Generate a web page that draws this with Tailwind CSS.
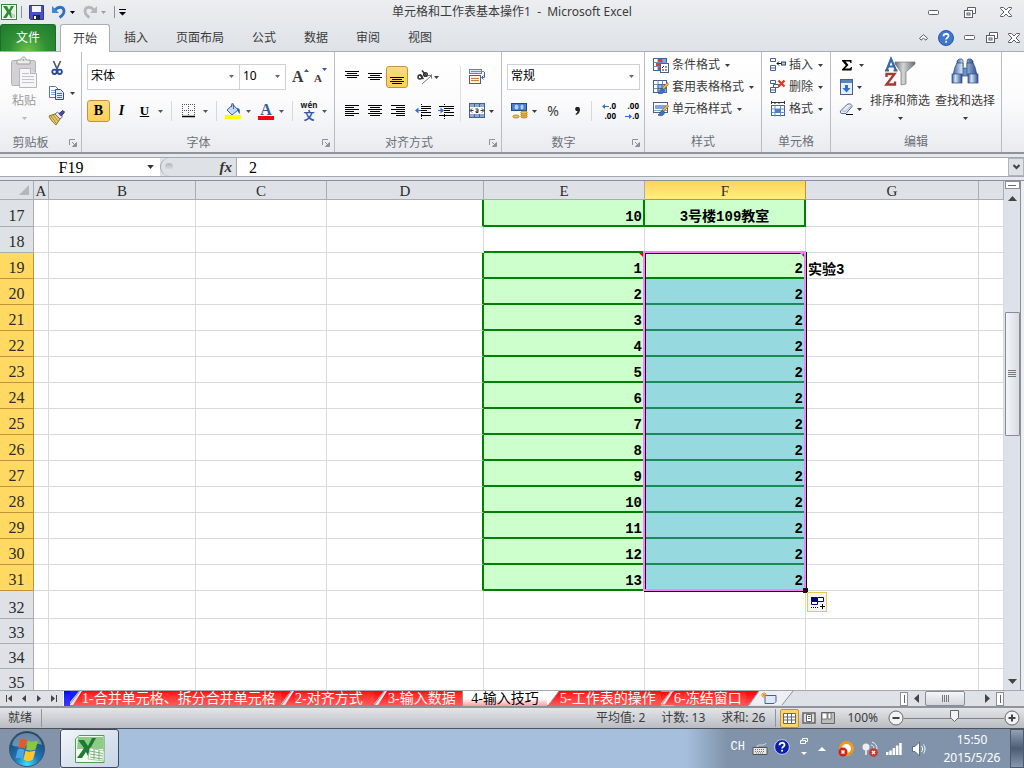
<!DOCTYPE html>
<html lang="zh-CN">
<head>
    <meta charset="UTF-8">
    <meta name="viewport" content="width=device-width, initial-scale=1.0">
    <title>单元格和工作表基本操作1 - Microsoft Excel</title>
    <script src="https://cdn.jsdelivr.net/npm/@tailwindcss/browser@4"></script>
</head>
<body class="h-screen flex flex-col overflow-hidden bg-[#e4e7eb] text-[12px] leading-4 text-[#3b3b3b] font-['Noto_Sans','Noto_Sans_CJK_SC',sans-serif]">

    <!-- Shared icons -->
    <svg class="absolute w-0 h-0">
        <symbol id="arrow" viewBox="0 0 5 3"><path d="M0 0h5L2.500 3z" fill="currentColor"/></symbol>
        <symbol id="launcher" viewBox="0 0 8 8"><path d="M.5 6V.5H6" fill="none" stroke="#8b929b"/><path d="M3 3l3 3M7.500 3.500v4h-4z" stroke="#8b929b" fill="#8b929b"/></symbol>
        <symbol id="win-min" viewBox="0 0 12 5"><rect x=".5" y=".5" width="10" height="4" rx="1" fill="#fff" stroke="#5a5f69"/></symbol>
        <symbol id="win-restore" viewBox="0 0 12 11"><path d="M3.500 3V.5h8v6H9" fill="#fff" stroke="#5a5f69"/><rect x=".5" y="3.500" width="8" height="7" fill="#fff" stroke="#5a5f69"/><rect x="3" y="6" width="3" height="2" fill="none" stroke="#5a5f69"/></symbol>
        <symbol id="win-close" viewBox="0 0 12 10"><path d="M.5.5h3L6 3 8.500.5h3v1L8 5l3.500 3.500v1h-3L6 7 3.500 9.500h-3v-1L4 5 .5 1.500z" fill="#fff" stroke="#5a5f69"/></symbol>
        <symbol id="grid16" viewBox="0 0 16 16"><rect x=".5" y="1.500" width="13" height="12" fill="#fff" stroke="#3f5f96"/><path d="M.5 5.500h13M.5 9.500h13M5 1.500v12M9.500 1.500v12" stroke="#6d8fc4"/></symbol>
        <symbol id="brush16" viewBox="0 0 16 16"><path d="M15.500 5.500l-5 5-1.500-.500.500-1.500 5-5z" fill="#f4b63c" stroke="#a66a14" stroke-width=".7"/><path d="M10 9.500c-1.500 0-2.500 1-3 2.500-.3 1-1 1.500-2 2 3 1.500 6.500.5 6.500-3z" fill="#3c74cc" stroke="#1f4b94" stroke-width=".7"/></symbol>
        <linearGradient id="barrel"><stop stop-color="#3a62a0"/><stop offset=".35" stop-color="#cfe0f6"/><stop offset="1" stop-color="#2e5290"/></linearGradient>
        <linearGradient id="funnel"><stop stop-color="#6c6f73"/><stop offset=".4" stop-color="#d4d6d8"/><stop offset="1" stop-color="#6a6d70"/></linearGradient>
        <linearGradient id="redtab" x2="0" y2="1"><stop stop-color="#ff0000"/><stop offset="1" stop-color="#ff5b5b"/></linearGradient>
    </svg>

    <!-- Title bar -->
    <header class="h-6 shrink-0 flex items-center justify-between bg-linear-to-b from-[#eceef0] to-[#e5e8ec]">
        <div class="flex items-center w-[340px] pl-px">
            <svg class="w-4 h-4" viewBox="0 0 16 16"><rect x=".5" y=".5" width="15" height="15" fill="#fff" stroke="#2f8a3c"/><rect x="2" y="2" width="12" height="12" fill="#e3f2df"/><path d="M2 2h4l2 4 2-4h3L9.500 8l4 6H10L7.800 10 5.500 14H2l4-6z" fill="#2e8b34"/><path d="M10 10h4v4h-3z" fill="#b9dfb4"/></svg>
            <div class="w-px h-3 bg-[#8b8f96] ml-1"></div>
            <button class="ml-[7px]" aria-label="保存"><svg class="w-[15px] h-[15px]" viewBox="0 0 15 15"><path d="M.5.5h14v14h-13l-1-1z" fill="#4b50c0" stroke="#30358f"/><path d="M3 1h9v6H3z" fill="#f4f6fc"/><path d="M4 10h7v4.500H4z" fill="#1d2350"/><path d="M5 11h2v3H5z" fill="#fff"/></svg></button>
            <button class="ml-2" aria-label="撤消"><svg class="w-[14px] h-[14px]" viewBox="0 0 14 14"><path d="M3 5c4-4.500 9-3 9 1 0 3-2 5-4.500 6.500" fill="none" stroke="#2f6fc0" stroke-width="2.800"/><path d="M0 1V8h7z" fill="#4186d4"/></svg></button>
            <svg class="w-[5px] h-[3px] ml-1 text-black"><use href="#arrow"/></svg>
            <button class="ml-2" aria-label="恢复"><svg class="w-[14px] h-[14px]" viewBox="0 0 14 14"><path d="M11 5C7 .5 2 2 2 6c0 3 2 5 4.500 6.500" fill="none" stroke="#b4b8bd" stroke-width="2.800"/><path d="M14 1V8H7z" fill="#b4b8bd"/></svg></button>
            <svg class="w-[5px] h-[3px] ml-1 text-[#9a9ea5]"><use href="#arrow"/></svg>
            <div class="w-px h-3 bg-[#8b8f96] ml-2"></div>
            <svg class="w-[7px] h-[7px] ml-1" viewBox="0 0 7 7"><path d="M0 0h7v1H0zM0 3h7L3.500 6.500z" fill="#000"/></svg>
        </div>
        <h1 class="text-[12px] text-[#3b3b3b] whitespace-pre">单元格和工作表基本操作1  -  Microsoft Excel</h1>
        <div class="flex items-center justify-end gap-6 w-[340px] pr-3">
            <button aria-label="最小化"><svg class="w-3 h-[5px]"><use href="#win-min"/></svg></button>
            <button aria-label="还原"><svg class="w-3 h-[11px]"><use href="#win-restore"/></svg></button>
            <button aria-label="关闭"><svg class="w-3 h-[10px]"><use href="#win-close"/></svg></button>
        </div>
    </header>

    <!-- Ribbon tabs -->
    <nav class="h-7 shrink-0 flex items-stretch justify-between border-b border-[#a9adb5] bg-linear-to-b from-[#e5e8ec] to-[#dfe3e7]">
        <div class="flex">
            <button class="w-14 rounded-t-[3px] border border-[#1c6b28] border-b-0 bg-radial-[at_50%_100%] from-[#6cc24a] via-[#2f8f34] to-[#207a2e] text-white">文件</button>
            <button class="w-[50px] ml-1 -mb-px rounded-t-[3px] border border-[#a9adb5] border-b-0 bg-white">开始</button>
            <button class="px-3.5">插入</button>
            <button class="px-3.5">页面布局</button>
            <button class="px-3.5">公式</button>
            <button class="px-3.5">数据</button>
            <button class="px-3.5">审阅</button>
            <button class="px-3.5">视图</button>
        </div>
        <div class="flex items-center gap-2.5 pr-1">
            <button aria-label="功能区最小化"><svg class="w-[9px] h-[7px]" viewBox="0 0 9 7"><path d="M4.500.7l4 3.500-1.500 2-2.500-2-2.500 2-1.500-2z" fill="#fff" stroke="#5a5f69"/></svg></button>
            <button aria-label="帮助"><svg class="w-4 h-4" viewBox="0 0 16 16"><circle cx="8" cy="8" r="7.500" fill="#3f77cf" stroke="#2a59a8"/><path d="M5.500 6.200C5.500 3 10.700 3 10.500 6c0 1.800-2.400 1.800-2.400 3.600" fill="none" stroke="#fff" stroke-width="1.800"/><rect x="7.200" y="10.800" width="1.800" height="1.800" fill="#fff"/></svg></button>
            <button aria-label="最小化窗口"><svg class="w-3 h-[5px]"><use href="#win-min"/></svg></button>
            <button aria-label="还原窗口"><svg class="w-3 h-[11px]"><use href="#win-restore"/></svg></button>
            <button aria-label="关闭窗口"><svg class="w-3 h-[10px]"><use href="#win-close"/></svg></button>
        </div>
    </nav>

    <!-- Ribbon -->
    <div class="h-[102px] shrink-0 flex border-b-2 border-[#8e939c] bg-linear-to-b from-white via-[#fbfbfc] to-[#e9ebef]">
        <!-- Clipboard -->
        <section class="w-[82px] shrink-0 flex flex-col border-r border-[#b8bcc4]">
            <div class="flex-1 flex">
                <button class="w-12 flex flex-col items-center pt-1 text-[#9a9a9a]">
                    <svg class="w-8 h-8" viewBox="0 0 32 32"><rect x="3.500" y="4.500" width="24" height="25" rx="2" fill="#d3d1d3" stroke="#b3b0b3"/><path d="M9 8V4h4c0-4 5-4 5 0h4v4z" fill="#ececec" stroke="#a09da0"/><circle cx="15.500" cy="4" r="1" fill="#a09da0"/><path d="M11.500 12.500h11l6 5v14h-17z" fill="#f6f6f8" stroke="#b7b7bb"/><path d="M22.500 12.500v5h6" fill="#dcdce0" stroke="#b7b7bb"/><path d="M14 17.500h7M14 20.500h12M14 23.500h12M14 26.500h12" stroke="#c3c3c9"/></svg>
                    <span class="mt-[5px]">粘贴</span>
                    <svg class="w-[5px] h-[3px] mt-2 text-[#b9b9b9]"><use href="#arrow"/></svg>
                </button>
                <div class="flex flex-col gap-[9px] pt-2">
                    <button class="h-4 w-[18px] flex justify-center" aria-label="剪切"><svg class="w-4 h-4" viewBox="0 0 16 16"><path d="M4.500 1l4 9M11.500 1l-4 9" stroke="#4a5a78" stroke-width="1.700"/><circle cx="5.500" cy="11.800" r="2.200" fill="none" stroke="#24489a" stroke-width="1.800"/><circle cx="10.700" cy="11.800" r="2.200" fill="none" stroke="#24489a" stroke-width="1.800"/></svg></button>
                    <button class="h-4 flex items-center gap-1" aria-label="复制"><svg class="w-[18px] h-4" viewBox="0 0 18 16"><path d="M1.500 1.500h6l3 3v8h-9z" fill="#fff" stroke="#5575a8"/><path d="M3 5.500h5M3 7.500h5M3 9.500h5" stroke="#7fa0d8"/><path d="M7.500 4.500h5l3 3v7h-8z" fill="#dfeafb" stroke="#2a4f96"/><path d="M9 8.500h5M9 10.500h5M9 12.500h5" stroke="#3f6fc0"/></svg><svg class="w-[5px] h-[3px]"><use href="#arrow"/></svg></button>
                    <button class="h-4 w-[18px]" aria-label="格式刷"><svg class="w-[18px] h-4" viewBox="0 0 18 16"><path d="M1 6l6-2 5 5-4 6C6 13 3 11 1 6z" fill="#e8c766" stroke="#8d6b2a"/><path d="M3 6l5 7M5 5l5 6" stroke="#b08c3c"/><path d="M7 4l2.500-2 5 5L12 9z" fill="#e9e9f2" stroke="#777"/><path d="M11 3.500L15 .5l1.500 1.500-3 4z" fill="#4d4b9c" stroke="#35347a"/></svg></button>
                </div>
            </div>
            <div class="h-[20px] flex items-center pt-0.5 text-[#6b7078]"><span class="flex-1 text-center pr-2">剪贴板</span><svg class="w-2 h-2 mr-1"><use href="#launcher"/></svg></div>
        </section>

        <!-- Font -->
        <section class="w-[253px] shrink-0 flex flex-col border-r border-[#b8bcc4] pl-[5px]">
            <div class="flex-1 flex flex-col">
                <div class="flex items-center mt-3 h-[26px]">
                    <div class="relative"><select aria-label="字体" class="appearance-none block w-[153px] h-[26px] pl-[3px] pb-0.5 border border-[#cdd0d5] bg-white text-black text-[12px]"><option>宋体</option></select><svg class="absolute right-1.5 top-[11px] w-[5px] h-[3px] text-[#666]"><use href="#arrow"/></svg></div>
                    <div class="relative -ml-px"><select aria-label="字号" class="appearance-none block w-[47px] h-[26px] pl-[3px] pb-0.5 border border-[#cdd0d5] bg-white text-black text-[12px]"><option>10</option></select><svg class="absolute right-1.5 top-[11px] w-[5px] h-[3px] text-[#666]"><use href="#arrow"/></svg></div>
                    <button class="ml-1.5 w-[22px] flex" aria-label="增大字号"><span class="font-['Liberation_Serif',serif] font-bold text-[16px]">A</span><svg class="w-[5px] h-[3px]" viewBox="0 0 5 3"><path d="M0 3h5L2.500 0z" fill="#2a5aa8"/></svg></button>
                    <button class="w-[18px] flex" aria-label="减小字号"><span class="font-['Liberation_Serif',serif] font-bold text-[11px] pt-0.5">A</span><svg class="w-[5px] h-[3px] text-[#2a5aa8]"><use href="#arrow"/></svg></button>
                </div>
                <div class="flex items-center mt-2.5 h-[22px] text-[#555]">
                    <button class="w-[23px] h-[22px] rounded-[3px] border border-[#c2933b] bg-linear-to-b from-[#fbdc80] to-[#fbcf59] font-['Liberation_Serif',serif] font-bold text-black text-[14px]">B</button>
                    <button class="w-[23px] font-['Liberation_Serif',serif] italic font-bold text-black text-[14px]">I</button>
                    <button class="w-[23px] font-['Liberation_Serif',serif] font-bold underline text-black text-[13px]">U</button>
                    <svg class="w-[5px] h-[3px] ml-0.5"><use href="#arrow"/></svg>
                    <div class="w-px h-5 bg-[#d5d8dd] ml-2"></div>
                    <button class="ml-2.5" aria-label="边框"><svg class="w-[13px] h-[14px]" viewBox="0 0 13 14"><path d="M0 .5h13M0 6.500h13M.5 0v12M6.500 0v12M12.500 0v12" stroke="#555" stroke-dasharray="1 1"/><path d="M0 12.500h13" stroke="#000" stroke-width="1.500"/></svg></button>
                    <svg class="w-[5px] h-[3px] ml-2"><use href="#arrow"/></svg>
                    <div class="w-px h-5 bg-[#d5d8dd] ml-2"></div>
                    <button class="ml-2" aria-label="填充颜色"><svg class="w-4 h-4" viewBox="0 0 16 16"><path d="M2 7l6-5.500 5 5.500-6 5z" fill="#c3d9f3" stroke="#3c63a4"/><path d="M6.500 4V1.500c0-1.500 2-1.500 2 0V6" fill="none" stroke="#46618f"/><path d="M12 5c3 0 3.500 3 2.500 6-1.500-2-1.500-3-2.500-4z" fill="#2e62b8"/><path d="M0 12h16v4H0z" fill="#ff0"/></svg></button>
                    <svg class="w-[5px] h-[3px] ml-[5px]"><use href="#arrow"/></svg>
                    <button class="ml-[7px] w-4 h-[17px] flex flex-col items-center" aria-label="字体颜色"><span class="font-['Liberation_Serif',serif] font-bold text-[16px] leading-[13px] text-[#3a5c94]">A</span><span class="w-4 h-1 shrink-0 bg-[#ff0000]"></span></button>
                    <svg class="w-[5px] h-[3px] ml-[5px]"><use href="#arrow"/></svg>
                    <div class="w-px h-5 bg-[#d5d8dd] ml-2"></div>
                    <button class="ml-[7px] w-[18px] flex flex-col items-center text-[#222] font-bold"><span class="text-[8px] leading-[9px]">wén</span><span class="text-[11px] leading-[13px] text-[#2f57a8]">文</span></button>
                    <svg class="w-[5px] h-[3px] ml-1"><use href="#arrow"/></svg>
                </div>
            </div>
            <div class="h-[20px] flex items-center pt-0.5 text-[#6b7078]"><span class="flex-1 text-center pr-3">字体</span><svg class="w-2 h-2 mr-1"><use href="#launcher"/></svg></div>
        </section>

        <!-- Alignment -->
        <section class="w-[167px] shrink-0 flex flex-col border-r border-[#b8bcc4]">
            <div class="flex-1 flex pl-[5px] pt-3.5">
                <div class="w-[121px] h-14 grid content-between border-r border-[#dcdfe3]">
                    <div class="flex items-center h-[22px]">
                        <button class="w-[23px] flex justify-center" aria-label="顶端对齐"><svg class="w-[14px] h-[14px]" viewBox="0 0 14 14"><path d="M0 1.500h14M2 3.500h10M0 5.500h14M2 7.500h10" stroke="#000"/></svg></button>
                        <button class="w-[23px] flex justify-center" aria-label="垂直居中"><svg class="w-[14px] h-[14px]" viewBox="0 0 14 14"><path d="M0 3.500h14M2 5.500h10M0 7.500h14M2 9.500h10" stroke="#000"/></svg></button>
                        <button class="w-[22px] h-[22px] flex items-center justify-center rounded-[3px] border border-[#c2933b] bg-linear-to-b from-[#fbdc80] to-[#fbcf59]" aria-label="底端对齐"><svg class="w-[14px] h-[14px]" viewBox="0 0 14 14"><path d="M0 7.500h14M2 9.500h10M0 11.500h14M2 13.500h10" stroke="#000"/></svg></button>
                        <button class="ml-2 flex items-center gap-0.5" aria-label="方向"><svg class="w-4 h-4" viewBox="0 0 16 16"><g fill="none" stroke="#333" stroke-width="1.500"><circle cx="4" cy="8" r="2"/><path d="M3.500 5.500l4 4.500M6 1.500l5 6"/><circle cx="9.500" cy="5.500" r="1.800"/></g><path d="M6 15l9-8M15.500 5.500v4M15.500 6.500h-4" stroke="#777" fill="none"/></svg><svg class="w-[5px] h-[3px]"><use href="#arrow"/></svg></button>
                    </div>
                    <div class="flex items-center h-[22px]">
                        <button class="w-[23px] flex justify-center" aria-label="左对齐"><svg class="w-[14px] h-3" viewBox="0 0 14 12"><path d="M0 .5h14M0 2.500h9M0 4.500h14M0 6.500h9M0 8.500h14M0 10.500h9" stroke="#000"/></svg></button>
                        <button class="w-[23px] flex justify-center" aria-label="居中"><svg class="w-[14px] h-3" viewBox="0 0 14 12"><path d="M0 .5h14M2 2.500h10M0 4.500h14M2 6.500h10M0 8.500h14M2 10.500h10" stroke="#000"/></svg></button>
                        <button class="w-[23px] flex justify-center" aria-label="右对齐"><svg class="w-[14px] h-3" viewBox="0 0 14 12"><path d="M0 .5h14M5 2.500h9M0 4.500h14M5 6.500h9M0 8.500h14M5 10.500h9" stroke="#000"/></svg></button>
                        <button class="w-[25px] pl-1.5" aria-label="减少缩进"><svg class="w-4 h-[15px]" viewBox="0 0 16 15"><path d="M6 2.500h10M7 4.500h9M7 6.500h5M7 8.500h9M6 11.500h10" stroke="#000"/><path d="M6.500 0v15" stroke="#000" stroke-dasharray="1 1"/><path d="M0 6.500l3.500-3V6H6v1H3.500v2.500z" fill="#2e6fd0"/></svg></button>
                        <button class="w-[23px] pl-1" aria-label="增加缩进"><svg class="w-4 h-[15px]" viewBox="0 0 16 15"><path d="M1 2.500h15M7 4.500h9M7 6.500h5M7 8.500h9M1 11.500h15" stroke="#000"/><path d="M6.500 0v15" stroke="#000" stroke-dasharray="1 1"/><path d="M6 6.500l-3.500-3V6H0v1h2.500v2.500z" fill="#2e6fd0"/></svg></button>
                    </div>
                </div>
                <div class="h-14 flex flex-col justify-between pl-2">
                    <button class="h-[22px]" aria-label="自动换行"><svg class="w-4 h-4" viewBox="0 0 16 16"><rect x=".5" y=".5" width="12" height="4" fill="#dce6f3" stroke="#6480ab"/><path d="M2 2.500h13" stroke="#c87a3a"/><rect x=".5" y="6.500" width="11" height="8" fill="#fdf1df" stroke="#46618f"/><path d="M2 9.500h8M2 11.500h8" stroke="#c87a3a"/><path d="M15.500 3v5.500H13M14.500 6.500l-2 2 2 2" stroke="#46618f" fill="none"/></svg></button>
                    <button class="h-[22px] flex items-center gap-1" aria-label="合并后居中"><svg class="w-4 h-4" viewBox="0 0 16 16"><rect x=".5" y=".5" width="15" height="14" fill="#8fa9cd" stroke="#46618f"/><path d="M5.500 0v4M10.500 0v4M5.500 11v4M10.500 11v4" stroke="#46618f"/><rect x="1" y="4" width="14" height="7" fill="#fff"/><path d="M1.500 7.500h3M11.500 7.500h3M3 5.500l-2 2 2 2M13 5.500l2 2-2 2M6.500 6h2.500v3.500H7V8h2" stroke="#333" fill="none"/></svg><svg class="w-[5px] h-[3px]"><use href="#arrow"/></svg></button>
                </div>
            </div>
            <div class="h-[20px] flex items-center pt-0.5 text-[#6b7078]"><span class="flex-1 text-center pr-1.5">对齐方式</span><svg class="w-2 h-2 mr-1"><use href="#launcher"/></svg></div>
        </section>

        <!-- Number -->
        <section class="w-[143px] shrink-0 flex flex-col border-r border-[#b8bcc4] pl-[5px] pr-1">
            <div class="flex-1">
                <div class="relative mt-3"><select aria-label="数字格式" class="appearance-none block w-full h-[26px] pl-[3px] pb-0.5 border border-[#cdd0d5] bg-white text-black text-[12px]"><option>常规</option></select><svg class="absolute right-1.5 top-[11px] w-[5px] h-[3px] text-[#666]"><use href="#arrow"/></svg></div>
                <div class="flex items-center mt-2.5 h-[22px] pl-1">
                    <button aria-label="会计数字格式"><svg class="w-[17px] h-4" viewBox="0 0 17 16"><rect x=".5" y=".5" width="15" height="7" fill="#4a80d4" stroke="#23478c"/><ellipse cx="5.500" cy="4" rx="2" ry="2.500" fill="#b7d0f5"/><ellipse cx="11" cy="4" rx="1.500" ry="2.500" fill="#b7d0f5"/><g fill="#f5c34b" stroke="#9a6a12" stroke-width=".7"><ellipse cx="13" cy="13.500" rx="3.200" ry="1.500"/><ellipse cx="13" cy="11.500" rx="3.200" ry="1.500"/><ellipse cx="13" cy="9.500" rx="3.200" ry="1.500"/><ellipse cx="5" cy="13.500" rx="3.200" ry="1.500"/></g></svg></button>
                    <svg class="w-[5px] h-[3px] ml-1"><use href="#arrow"/></svg>
                    <button class="w-6 ml-1 text-[14px]" aria-label="百分比样式">%</button>
                    <button class="w-6" aria-label="千位分隔样式"><svg class="w-[5px] h-2 mx-auto" viewBox="0 0 5 8"><path d="M1 0h3l1 2c0 3-1 5-4 6l-.5-1C2 6 2.500 5 2.500 4H1L0 2z" fill="#222"/></svg></button>
                    <div class="w-px h-5 bg-[#d5d8dd] ml-0.5"></div>
                    <button class="ml-2 w-4 flex flex-col items-end text-[8px] leading-[10px] text-black font-bold" aria-label="增加小数位数"><span class="flex items-center"><svg class="w-[7px] h-[5px]" viewBox="0 0 7 5"><path d="M0 2.500L3 0v2h4v1H3v2z" fill="#2e6fd0"/></svg>.0</span><span>.00</span></button>
                    <button class="ml-[7px] w-4 flex flex-col items-end text-[8px] leading-[10px] text-black font-bold" aria-label="减少小数位数"><span>.00</span><span class="flex items-center"><svg class="w-[7px] h-[5px]" viewBox="0 0 7 5"><path d="M7 2.500L4 0v2H0v1h4v2z" fill="#2e6fd0"/></svg>.0</span></button>
                </div>
            </div>
            <div class="h-[20px] flex items-center pt-0.5 text-[#6b7078]"><span class="flex-1 text-center pr-3">数字</span><svg class="w-2 h-2"><use href="#launcher"/></svg></div>
        </section>

        <!-- Styles -->
        <section class="w-[117px] shrink-0 flex flex-col border-r border-[#b8bcc4]">
            <div class="flex-1 flex flex-col pl-2 pt-0.5">
                <button class="h-[22px] flex items-center"><svg class="w-4 h-4 mr-[3px]" viewBox="0 0 16 16"><use href="#grid16"/><path d="M5 2h4v3H5zM3 6h6v3H3zM5 10h3v3H5z" fill="#d9402c"/><path d="M10 2h3v4h-3z" fill="#7ea6e2"/><rect x="7.500" y="6.500" width="8" height="9" fill="#fff" stroke="#46618f"/><path d="M9 11l2-2M12 10h2M9 13h2M12 13h2" stroke="#222"/></svg>条件格式<svg class="w-[5px] h-[3px] ml-[5px]"><use href="#arrow"/></svg></button>
                <button class="h-[22px] flex items-center"><svg class="w-4 h-4 mr-[3px]" viewBox="0 0 16 16"><use href="#grid16"/><path d="M5 5.500h8.500v8H5z" fill="#8fb3e6" stroke="#46699f"/><path d="M9 6v7M5 9.500h8" stroke="#46699f"/><use href="#brush16"/></svg>套用表格格式<svg class="w-[5px] h-[3px] ml-[5px]"><use href="#arrow"/></svg></button>
                <button class="h-[22px] flex items-center"><svg class="w-4 h-4 mr-[3px]" viewBox="0 0 16 16"><rect x=".5" y="1.500" width="14" height="10" fill="#fff" stroke="#46618f"/><path d="M2 4h11v4H2z" fill="#7ea6e2"/><path d="M1 9.500h13" stroke="#8ba6cf"/><use href="#brush16"/></svg>单元格样式<svg class="w-[5px] h-[3px] ml-[5px]"><use href="#arrow"/></svg></button>
            </div>
            <div class="h-[20px] pt-0.5 text-center text-[#6b7078]">样式</div>
        </section>

        <!-- Cells -->
        <section class="w-[69px] shrink-0 flex flex-col border-r border-[#b8bcc4]">
            <div class="flex-1 flex flex-col pl-2 pt-0.5">
                <button class="h-[22px] flex items-center"><svg class="w-4 h-4 mr-[3px]" viewBox="0 0 16 16"><path d="M.5 1.500h5v3h-5zM.5 8.500h5v5h-5zM.5 11h5" fill="#fff" stroke="#46618f"/><rect x="11.500" y="5" width="4" height="3" fill="#b9d0f2" stroke="#23478c"/><path d="M7 6.500h4M9 4.500l-2 2 2 2" stroke="#111" fill="none"/></svg>插入<svg class="w-[5px] h-[3px] ml-[5px]"><use href="#arrow"/></svg></button>
                <button class="h-[22px] flex items-center"><svg class="w-4 h-4 mr-[3px]" viewBox="0 0 16 16"><path d="M.5 1.500h5v3h-5zM.5 8.500h5v5h-5zM.5 11h5M3.500 5.500h5v3h-5z" fill="#fff" stroke="#46618f"/><path d="M8.500 1.500l6 6M14.500 1.500l-6 6" stroke="#e03c24" stroke-width="2.400"/></svg>删除<svg class="w-[5px] h-[3px] ml-[5px]"><use href="#arrow"/></svg></button>
                <button class="h-[22px] flex items-center"><svg class="w-4 h-4 mr-[3px]" viewBox="0 0 16 16"><path d="M1 1.500h14M1.500 0v3M14.500 0v3M5 1v2M9 1v2" stroke="#333"/><rect x="1.500" y="4.500" width="13" height="10" fill="#fff" stroke="#46618f"/><path d="M1.500 8h13M1.500 11.500h13M5 4.500v11M10.500 4.500v11" stroke="#6d8fc4"/><rect x="5" y="8" width="6" height="4" fill="#4a80d4"/></svg>格式<svg class="w-[5px] h-[3px] ml-[5px]"><use href="#arrow"/></svg></button>
            </div>
            <div class="h-[20px] pt-0.5 text-center text-[#6b7078]">单元格</div>
        </section>

        <!-- Editing -->
        <section class="w-[171px] shrink-0 flex flex-col border-r border-[#b8bcc4]">
            <div class="flex-1 flex pl-2 pt-0.5">
                <div class="w-7 flex flex-col">
                    <button class="h-[22px] flex items-center" aria-label="自动求和"><svg class="w-4 h-3" viewBox="0 0 16 12"><path d="M3 1h9.500v3h-1L10.500 2.500H6.500L9.500 6l-3.500 3.500h5l1-1.500h1l-.5 3.500H3v-1L6.800 6.200 3 2z" fill="#000"/></svg><svg class="w-[5px] h-[3px] ml-1"><use href="#arrow"/></svg></button>
                    <button class="h-[22px] flex items-center" aria-label="填充"><svg class="w-4 h-4" viewBox="0 0 16 16"><rect x="1.500" y=".5" width="12" height="15" fill="#e6effb" stroke="#46618f"/><path d="M2 1h11v3H2z" fill="#5b84bf"/><path d="M6 6h3v3h2.500l-4 4.500-4-4.500H6z" fill="#2e6fd0"/></svg><svg class="w-[5px] h-[3px] ml-0.5"><use href="#arrow"/></svg></button>
                    <button class="h-[22px] flex items-center" aria-label="清除"><svg class="w-4 h-4" viewBox="0 0 16 16"><path d="M1.500 10l6.500-6.500c3-1.500 5 0 5 2L7 12.500H3c-1.500 0-2-1-1.500-2.500z" fill="#e6edf7" stroke="#56698a"/><path d="M2 9.500l4 1 6.500-6" fill="none" stroke="#9fb0cc"/><path d="M7 13.500h7" stroke="#000"/></svg><svg class="w-[5px] h-[3px] ml-0.5"><use href="#arrow"/></svg></button>
                </div>
                <button class="w-[66px] flex flex-col items-center pt-0.5">
                    <svg class="w-8 h-8" viewBox="0 0 32 32"><path d="M11 6h20v2l-9 8v12l-5 1V16l-6-8z" fill="url(#funnel)" stroke="#6a6a6a" stroke-width=".6"/><path d="M2.500 14.500L7 3l5 11.500M4 10.500h6M1 14.500h4M9.500 14.500h4" fill="none" stroke="#3567ab" stroke-width="2.200"/><path d="M2.500 21v-3h8L2.500 28.500h8.500v-3" fill="none" stroke="#a33a35" stroke-width="2.400"/></svg>
                    <span class="mt-[5px]">排序和筛选</span>
                    <svg class="w-[5px] h-[3px] mt-2"><use href="#arrow"/></svg>
                </button>
                <button class="w-[64px] flex flex-col items-center pt-0.5">
                    <svg class="w-8 h-8" viewBox="0 0 32 32"><g stroke="#2d4a7c" stroke-width=".7"><rect x="13" y="12" width="6" height="8" fill="#6d93cc"/><path d="M8 5l2-2h3l1 2v6H8zM18 5l1-2h3l2 2v6h-6z" fill="url(#barrel)"/><path d="M6 11l2-4h6v12H4zM18 7h6l2 4 2 8H18z" fill="url(#barrel)"/><rect x="3" y="18" width="10" height="9" fill="url(#barrel)"/><rect x="19" y="18" width="10" height="9" fill="url(#barrel)"/></g></svg>
                    <span class="mt-[5px]">查找和选择</span>
                    <svg class="w-[5px] h-[3px] mt-2"><use href="#arrow"/></svg>
                </button>
            </div>
            <div class="h-[20px] pt-0.5 text-center text-[#6b7078]">编辑</div>
        </section>
    </div>

    <!-- Formula bar -->
    <div class="mt-[3px] h-5 shrink-0 flex border-y border-[#a4a8b0] bg-[#dee1e6] text-black">
        <div class="relative w-[160px] bg-white">
            <input type="text" aria-label="名称框" value="F19" class="block w-[142px] h-full pt-0.5 text-center bg-white text-[16px] font-['Liberation_Serif',serif]">
            <svg class="absolute right-1.5 top-[7px] w-[7px] h-1 text-[#333]"><use href="#arrow"/></svg>
        </div>
        <div class="w-[77px] flex items-center justify-between border-r border-l rounded-l-full border-[#a4a8b0] pl-1 pr-1">
            <span class="w-2 h-2 rounded-full bg-linear-to-b from-[#b3b6bb] to-[#e6e8ec]"></span>
            <span class="font-['Liberation_Serif',serif] italic font-bold text-[15px] text-[#333]">fx</span>
        </div>
        <input type="text" aria-label="编辑栏" value="2" class="flex-1 min-w-0 pt-0.5 bg-white pl-3 text-[16px] font-['Liberation_Serif',serif]">
        <button class="w-4 border border-[#b0b4bb] flex items-center justify-center" aria-label="展开编辑栏"><svg class="w-[7px] h-[6px]" viewBox="0 0 7 6"><path d="M.5 1l3 3 3-3" fill="none" stroke="#444" stroke-width="2"/></svg></button>
    </div>

    <!-- Sheet -->
    <main class="flex-1 min-h-0 mt-[3px] flex border-t border-[#8a9099]">
        <div class="flex-1 min-w-0 overflow-hidden bg-white">
            <table class="w-full table-fixed border-separate border-spacing-0">
                <colgroup>
                    <col class="w-[34px]"><col class="w-[15px]"><col class="w-[147px]"><col class="w-[131px]"><col class="w-[157px]"><col class="w-[161px]"><col class="w-[161px]"><col class="w-[173px]"><col>
                </colgroup>
                <thead>
                    <tr id="colHeads" class="h-[19px] bg-[#dee1e6] text-[#2b2b2b] text-[15px] leading-4 font-['Liberation_Serif',serif]"></tr>
                </thead>
                <tbody id="rows"></tbody>
            </table>
        </div>
        <div class="w-4 flex flex-col items-center bg-[#dde2ea]">
            <div class="w-[15px] h-2 border border-[#8a9099] bg-white flex items-center justify-center"><span class="w-2 h-px bg-[#666]"></span></div>
            <button class="h-[18px]" aria-label="向上滚动"><svg class="w-[9px] h-[5px]" viewBox="0 0 9 5"><path d="M0 5h9L4.500 0z" fill="#444"/></svg></button>
            <div class="flex-4"></div>
            <div class="w-[15px] h-[124px] rounded-[1px] border border-[#868d98] bg-linear-to-r from-[#f4f6f9] to-[#d8dce2] flex flex-col items-center justify-center gap-px">
                <span class="w-2 h-px bg-[#777]"></span><span class="w-2 h-px bg-[#777]"></span><span class="w-2 h-px bg-[#777]"></span><span class="w-2 h-px bg-[#777]"></span>
            </div>
            <div class="flex-9"></div>
            <button class="h-[18px]" aria-label="向下滚动"><svg class="w-[9px] h-[5px]" viewBox="0 0 9 5"><path d="M0 0h9L4.500 5z" fill="#444"/></svg></button>
        </div>
        <div class="w-1 border-l border-[#8a9099] bg-[#eceef1]"></div>
    </main>

    <!-- Sheet tabs and horizontal scroll bar -->
    <div class="h-4 shrink-0 flex items-stretch justify-between border-t border-[#a4a8b0] bg-[#dee1e6]">
        <div class="flex h-[15px] text-[14px] leading-[15px] text-white font-['Liberation_Serif','Noto_Sans_CJK_SC',serif] whitespace-nowrap">
            <div class="w-[63px] flex items-center justify-around px-0.5">
                <button aria-label="第一张"><svg class="w-[7px] h-[7px]" viewBox="0 0 7 7"><path d="M0 0h1v7H0zM6 0v7L2 3.500z" fill="#444"/></svg></button>
                <button aria-label="上一张"><svg class="w-[7px] h-[7px]" viewBox="0 0 7 7"><path d="M5 0v7L1 3.500z" fill="#444"/></svg></button>
                <button aria-label="下一张"><svg class="w-[7px] h-[7px]" viewBox="0 0 7 7"><path d="M2 0v7l4-3.500z" fill="#444"/></svg></button>
                <button aria-label="最后一张"><svg class="w-[7px] h-[7px]" viewBox="0 0 7 7"><path d="M6 0h1v7H6zM1 0v7l4-3.500z" fill="#444"/></svg></button>
            </div>
            <button class="w-[7px] border-l border-white bg-linear-to-b from-[#0000ff] to-[#3a3aff]" aria-label="说明"></button>
            <svg class="w-3 h-[15px]" viewBox="0 0 12 15"><path d="M0 0h12v15H0z" fill="url(#redtab)"/><path d="M0 0h11L1 13H0z" fill="#1a1aff"/><path d="M9 0h3L3 14H0v-3z" fill="#e4e6ea"/><path d="M10 0L0 13" stroke="#8f949d"/></svg>
            <button class="w-[199px] overflow-hidden text-left bg-linear-to-b from-[#ff0000] to-[#ff5b5b]">1-合并单元格、拆分合并单元格</button>
            <svg class="w-[14px] h-[15px]" viewBox="0 0 14 15"><path d="M0 0h14v15H0z" fill="url(#redtab)"/><path d="M10 0h3L4 14H0v-1z" fill="#e4e6ea"/><path d="M10.500 0L.5 14" stroke="#8f949d"/></svg>
            <button class="w-[79px] text-left bg-linear-to-b from-[#ff0000] to-[#ff5b5b]">2-对齐方式</button>
            <svg class="w-[14px] h-[15px]" viewBox="0 0 14 15"><path d="M0 0h14v15H0z" fill="url(#redtab)"/><path d="M10 0h3L4 14H0v-1z" fill="#e4e6ea"/><path d="M10.500 0L.5 14" stroke="#8f949d"/></svg>
            <button class="w-[75px] text-left border-r border-[#8f949d] bg-linear-to-b from-[#ff0000] to-[#ff5b5b]">3-输入数据</button>
            <button class="w-[84px] text-center text-black bg-linear-to-b from-white via-white to-[#ff9a9a]">4-输入技巧</button>
            <svg class="w-[13px] h-[15px]" viewBox="0 0 13 15"><path d="M0 0h13v15H0z" fill="url(#redtab)"/><path d="M0 0h12L1 14H0z" fill="#fff"/><path d="M12 0L2 14" stroke="#8f949d"/></svg>
            <button class="w-[101px] text-left bg-linear-to-b from-[#ff0000] to-[#ff5b5b]">5-工作表的操作</button>
            <svg class="w-[13px] h-[15px]" viewBox="0 0 14 15"><path d="M0 0h14v15H0z" fill="url(#redtab)"/><path d="M10 0h3L4 14H0v-1z" fill="#e4e6ea"/><path d="M10.500 0L.5 14" stroke="#8f949d"/></svg>
            <button class="w-[72px] text-left bg-linear-to-b from-[#ff0000] to-[#ff5b5b]">6-冻结窗口</button>
            <button aria-label="插入工作表"><svg class="w-[48px] h-[15px]" viewBox="0 0 48 15"><path d="M0 0h13L2 15H0z" fill="url(#redtab)"/><path d="M13 0h34L36 14H3z" fill="#edeff2"/><path d="M13 0L3 14M47 0L36 14" stroke="#8f949d" fill="none"/><path d="M19 4.500h11v6l-2 2h-9z" fill="#dce9f8" stroke="#46618f"/><path d="M18 1v6M15 4h6M16 2l4 4M20 2l-4 4" stroke="#e0952a"/></svg></button>
        </div>
        <div class="flex items-center gap-1.5 pr-5">
            <span class="w-2 h-[14px] border border-[#8a9099] bg-white flex items-center justify-center"><span class="w-px h-2 bg-[#666]"></span></span>
            <button aria-label="向左滚动"><svg class="w-[5px] h-[9px]" viewBox="0 0 5 9"><path d="M5 0v9L0 4.500z" fill="#444"/></svg></button>
            <span class="w-10 h-[15px] rounded-[2px] border border-[#868d98] bg-linear-to-b from-[#f4f6f9] to-[#d2d6dc] flex items-center justify-center gap-px"><span class="w-px h-[7px] bg-[#777]"></span><span class="w-px h-[7px] bg-[#777]"></span><span class="w-px h-[7px] bg-[#777]"></span><span class="w-px h-[7px] bg-[#777]"></span></span>
            <button class="ml-[14px]" aria-label="向右滚动"><svg class="w-[5px] h-[9px]" viewBox="0 0 5 9"><path d="M0 0v9l5-4.500z" fill="#444"/></svg></button>
            <span class="w-2 h-[14px] border border-[#8a9099] bg-white flex items-center justify-center"><span class="w-px h-2 bg-[#666]"></span></span>
        </div>
    </div>

    <!-- Status bar -->
    <footer class="h-[23px] shrink-0 flex items-center justify-between border-t-2 border-b border-t-[#8e939c] border-b-[#4f545c] bg-linear-to-b from-[#e3e5e8] to-[#b9bdc3]">
        <div class="flex items-center pl-2 gap-[9px]"><span>就绪</span><span class="w-px h-[18px] bg-[#8e939c]"></span></div>
        <div class="flex items-center pr-1">
            <span class="whitespace-pre">平均值: 2</span><span class="ml-4 whitespace-pre">计数: 13</span><span class="ml-4 whitespace-pre">求和: 26</span>
            <span class="w-px h-[18px] ml-2.5 mr-1 bg-[#8e939c]"></span>
            <button class="w-[19px] h-[19px] flex items-center justify-center rounded-[2px] border border-[#c2933b] bg-[#fbd56b]" aria-label="普通视图"><svg class="w-[13px] h-[11px]" viewBox="0 0 13 11"><path d="M.5.5h12v10H.5zM.5 4h12M.5 7h12M4.500.5v10M8.500.5v10" fill="#fff" stroke="#666"/></svg></button>
            <button class="ml-[3px]" aria-label="页面布局视图"><svg class="w-[14px] h-3" viewBox="0 0 14 12"><path d="M1 1h12v10H1z" fill="#ddd" stroke="#666" stroke-width="1.500"/><path d="M4.500 2.500h5v7h-5zM6 4.500h2.500M6 6.500h2.500" fill="#fff" stroke="#666"/></svg></button>
            <button class="ml-[5px]" aria-label="分页预览"><svg class="w-[14px] h-3" viewBox="0 0 14 12"><path d="M.5.5h13v11H.5z" fill="#bbb" stroke="#666"/><path d="M1 1h5v6H1zM7 1h3v6H7z" fill="#fff" stroke="#666" stroke-width=".8"/></svg></button>
            <span class="ml-3">100%</span>
            <button class="ml-2.5" aria-label="缩小"><svg class="w-4 h-4" viewBox="0 0 16 16"><circle cx="8" cy="8" r="7" fill="#f2f3f5" stroke="#666"/><path d="M4.500 8h7" stroke="#444" stroke-width="2"/></svg></button>
            <div class="relative w-[100px] h-4 flex items-center">
                <span class="w-full h-px bg-[#7d828b]"></span>
                <svg class="absolute left-[46px] top-0 w-[9px] h-3" viewBox="0 0 9 12"><path d="M.5.5h8v7l-4 4-4-4z" fill="#f2f3f5" stroke="#666"/></svg>
            </div>
            <button aria-label="放大"><svg class="w-4 h-4" viewBox="0 0 16 16"><circle cx="8" cy="8" r="7" fill="#f2f3f5" stroke="#666"/><path d="M4.500 8h7M8 4.500v7" stroke="#444" stroke-width="2"/></svg></button>
        </div>
    </footer>

    <!-- Taskbar -->
    <div class="h-[39px] shrink-0 flex items-stretch justify-between bg-linear-to-r from-[#a6bfdc] from-67% to-[#8093aa] to-71%">
        <div class="flex">
            <button class="w-[60px] bg-[#8293aa] flex items-center pl-2" aria-label="开始菜单">
                <svg class="w-[38px] h-[38px]" viewBox="0 0 38 38"><defs><radialGradient id="orb" cx=".5" cy=".95" r=".9"><stop stop-color="#3fe0ff"/><stop offset=".4" stop-color="#1b78b8"/><stop offset="1" stop-color="#1c4268"/></radialGradient></defs><circle cx="19" cy="19" r="17.500" fill="url(#orb)" stroke="#38576f"/><path d="M4 15C7-1 31-1 34 15 26 11 12 20 4 15z" fill="#fff" opacity=".35"/><path d="M12 10c3-2 5-1 7 0l-2 9c-2-1-4-2-7 0z" fill="#e8592a"/><path d="M20 10.500c3 2 6 1 10 0l-2.500 9c-3 1-6 2-9.500 0z" fill="#8dc63f"/><path d="M9.500 20c3-2 5-1 7 0l-2 9c-2-1-4-2-7 0z" fill="#4aa6e0"/><path d="M17.500 20.500c3 2 6 1 10 0l-2.500 9c-3 2-6 2-9.500 0z" fill="#fcc52f"/></svg>
            </button>
            <button class="w-[59px] flex items-center justify-center rounded-[3px] border border-[#3c4a5c] bg-linear-to-br from-[#f3f6fa] via-[#dbe4ef] to-[#c6d5e7]" aria-label="Microsoft Excel">
                <svg class="w-8 h-8" viewBox="0 0 32 32"><path d="M5 2.500h25v27H1.500V6z" fill="#f4fbf2" stroke="#48a04c"/><path d="M4 4h25v12H3z" fill="#8ecb84"/><path d="M4 7h6l4 6 4-8h4l-6 11 6 9h-7l-3-6-4 6H3l7-10z" fill="#1f7a34"/><path d="M16 15l14 3v10l-16-2z" fill="#fff" stroke="#a9c9a4"/><path d="M16 18l13 2.500M16 21l13 2M16 24l13 2M20 16v10M25 17v10" stroke="#78b074"/></svg>
            </button>
        </div>
        <div class="flex items-center text-white">
            <span class="font-['Liberation_Mono',monospace] text-[12px] pb-1">CH</span>
            <svg class="w-4 h-4 ml-[7px]" viewBox="0 0 16 16"><path d="M1 6.500h14v7H1z" fill="#e8e8e8" stroke="#555"/><path d="M3 8.500h10M3 10.500h10M4 12h7" stroke="#777" stroke-dasharray="1 1"/><path d="M5 6c0-4 8 0 9-4" stroke="#ddd" fill="none"/></svg>
            <svg class="w-4 h-4 ml-1.5 mb-1" viewBox="0 0 16 16"><circle cx="8" cy="8" r="7.400" fill="#0b1ea8" stroke="#c7cfe8"/><path d="M5.500 6.200C5.500 3 10.700 3 10.500 6c0 1.800-2.400 1.800-2.400 3.600" fill="none" stroke="#fff" stroke-width="1.800"/><rect x="7.200" y="10.800" width="1.800" height="1.800" fill="#fff"/></svg>
            <svg class="w-2 h-[18px] ml-2.5 mb-1" viewBox="0 0 8 18"><path d="M2.500 2V.5h5v3H6M.5 2.500h5v3h-5z" fill="none" stroke="#fff"/><path d="M1 14h6l-3 3z" fill="#fff"/></svg>
            <svg class="w-2 h-1 ml-2.5" viewBox="0 0 8 4"><path d="M0 4h8L4 0z" fill="#fff"/></svg>
            <svg class="w-4 h-4 ml-3" viewBox="0 0 16 16"><circle cx="8.500" cy="7.500" r="6" fill="#fff" stroke="#ef9a1a" stroke-width="3"/><circle cx="5" cy="11" r="4.500" fill="#d3221c"/><path d="M3.500 9.500l3 3M6.500 9.500l-3 3" stroke="#fff" stroke-width="1.500"/></svg>
            <svg class="w-4 h-4 ml-2" viewBox="0 0 16 16"><circle cx="4" cy="6" r="3.500" fill="#eee"/><path d="M3 9h2v5H3z" fill="#ddd"/><path d="M9 4c2 0 3 2 3 4M10 1c3 1 5 3 5 7" stroke="#eee" fill="none"/><circle cx="11.500" cy="11.500" r="4.300" fill="#c7382a"/><path d="M10 10l3 3M13 10l-3 3" stroke="#fff" stroke-width="1.400"/></svg>
            <svg class="w-4 h-3 ml-2" viewBox="0 0 16 12"><path d="M0 9h2.500v3H0zM3.300 7.500h2.500V12H3.300zM6.600 5h2.500v7H6.600zM9.900 2.500h2.500V12H9.900zM13.200 0h2.500v12h-2.500z" fill="#fff"/></svg>
            <svg class="w-[14px] h-4 ml-2.5" viewBox="0 0 14 16"><path d="M.5 5.500H3l4.500-4.500v14L3 10.500H.5z" fill="#fff" stroke="#5d6b80"/><path d="M9.500 5c1.500 2 1.500 4 0 6M11.500 3.500c2 3 2 6 0 9" stroke="#fff" fill="none"/></svg>
            <div class="ml-4 w-[60px] text-center leading-[18px] whitespace-nowrap"><div>15:50</div><div>2015/5/26</div></div>
            <button class="ml-2 w-[14px] self-stretch border border-[#4b5a70] bg-linear-to-b from-[#93a2b5] via-[#4d5d73] to-[#8798ad]" aria-label="显示桌面"></button>
        </div>
    </div>

    <script>
        const columns = ['A', 'B', 'C', 'D', 'E', 'F', 'G', ''];
        const colHeads = document.getElementById('colHeads');
        const body = document.getElementById('rows');

        // Column headings, F is the selected column
        let heads = '<th class="border-r border-b border-[#a9adb3]"><svg class="ml-auto mr-1 w-[10px] h-[10px]" viewBox="0 0 10 10"><path d="M10 0v10H0z" fill="#b4b8be"/></svg></th>';
        for (const name of columns) {
            heads += name === 'F'
                ? '<th class="pt-0.5 font-normal border-r border-b border-[#c2933b] bg-linear-to-b from-[#ffd25c] to-[#fff07c]">F</th>'
                : `<th class="pt-0.5 font-normal border-r border-b border-[#a9adb3]">${name}</th>`;
        }
        colHeads.innerHTML = heads;

        const heights = { 17: 'h-[27px]', 32: 'h-[28px]', 33: 'h-[25px]', 34: 'h-[25px]', 35: 'h-[25px]' };
        const plain = 'border-r border-b border-[#d9d9d9]';

        // Selection frame with fill handle and the auto fill options button
        const frame = `
            <div class="absolute z-10 -left-0.5 -top-0.5 w-[163px] h-[340px] border-2 border-[#ff80ff] shadow-[1px_1px_0_#000,inset_1px_1px_0_#300030]">
                <span class="absolute right-0 top-0 border-2 border-t-[#00ffff] border-r-[#ff0000] border-l-transparent border-b-transparent"></span>
                <span class="absolute -right-1 -bottom-1 w-[5px] h-[5px] bg-[#111]"></span>
                <button class="absolute left-[162px] top-[339px] w-5 h-5 border border-[#eac54f] bg-[#f4f4f4] flex items-center justify-center" aria-label="自动填充选项"><svg class="w-[15px] h-[15px]" viewBox="0 0 15 15"><path d="M1 2h6v4H1z" fill="#000080"/><path d="M7.500 2.500h6v4h-6zM1.500 6.500h6v3h-6z" fill="#fff" stroke="#000080"/><path d="M1 12.500h8" stroke="#000" stroke-dasharray="1 1"/><path d="M10 11.500h5M12.500 9v5" stroke="#000"/></svg></button>
            </div>`;

        for (let n = 17; n <= 35; n++) {
            const filled = n >= 19 && n <= 31;
            const cell = { A: '', B: '', C: '', D: '', E: '', F: '', G: '', '': '' };
            const look = {};
            if (filled) {
                cell.E = n - 18;
                cell.F = 2;
                look.D = 'border-r-2 border-b border-r-[#008000] border-b-[#d9d9d9]';
                look.E = 'relative border-r-2 border-b-2 border-[#008000] bg-[#ccffcc] pr-px text-right';
                look.F = n === 19
                    ? 'relative border-r-2 border-b-2 border-[#008000] bg-[#ccffcc] pr-px text-right'
                    : 'border-r-2 border-b-2 border-[#1a8a5a] bg-[#96dadf] pr-px text-right';
            }
            if (n === 17) {
                cell.E = 10;
                cell.F = '3号楼109教室';
                look.D = 'border-r-2 border-b border-r-[#008000] border-b-[#d9d9d9]';
                look.E = 'border-r-2 border-b-2 border-[#008000] bg-[#ccffcc] pr-px text-right';
                look.F = 'border-r-2 border-b-2 border-[#008000] bg-[#ccffcc] text-center';
            }
            if (n === 18) {
                look.E = 'border-r border-b-2 border-r-[#d9d9d9] border-b-[#008000]';
                look.F = 'border-r border-b-2 border-r-[#d9d9d9] border-b-[#008000]';
            }
            if (n === 19) {
                cell.E = '1<span class="absolute right-0 top-0 border-2 border-t-[#ff0000] border-r-[#ff0000] border-l-transparent border-b-transparent"></span>';
                cell.F = '2' + frame;
                cell.G = '实验3';
                look.G = 'border-r border-b border-[#d9d9d9] pl-0.5';
            }

            let html = filled
                ? `<th class="border-r border-b border-[#c2933b] bg-[#ffd961] align-bottom font-normal text-[16px] leading-5 text-[#2b2b2b] font-['Liberation_Serif',serif]">${n}</th>`
                : `<th class="border-r border-b border-[#a9adb3] bg-[#dee1e6] align-bottom font-normal text-[16px] leading-5 text-[#2b2b2b] font-['Liberation_Serif',serif]">${n}</th>`;
            for (const name of columns) {
                html += `<td class="${look[name] || plain}">${cell[name]}</td>`;
            }

            const tr = document.createElement('tr');
            tr.className = "align-bottom whitespace-nowrap font-bold text-[14px] leading-4 text-black font-['Liberation_Mono','Noto_Sans_CJK_SC',monospace]";
            tr.classList.add(heights[n] || 'h-[26px]');
            tr.innerHTML = html;
            body.appendChild(tr);
        }
    </script>
</body>
</html>
